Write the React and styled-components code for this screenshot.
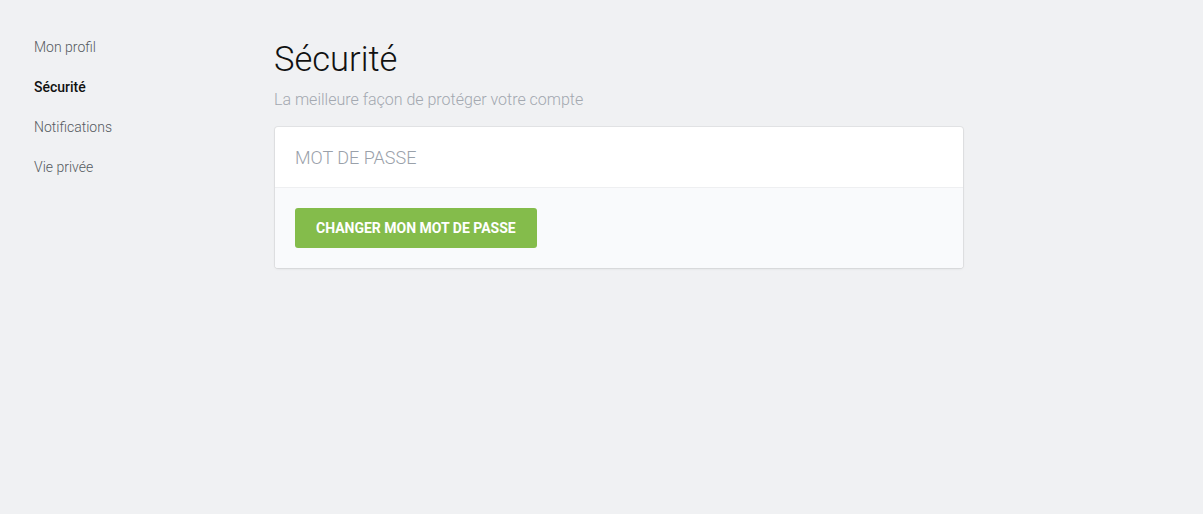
import React from 'react';
import styled, { createGlobalStyle } from 'styled-components';

const GlobalStyle = createGlobalStyle`
    html, body {
        margin: 0;
        padding: 0;
        background: #f0f1f3;
    }
    body {
        font-family: Roboto, "Liberation Sans", sans-serif;
        -webkit-font-smoothing: antialiased;
    }
`;

const Page = styled.div`
    display: flex;
    min-height: 513px;
    background: #f0f1f3;
`;

const Sidebar = styled.nav`
    display: flex;
    flex-direction: column;
    width: 274px;
    flex-shrink: 0;
    padding: 29px 0 0 34px;
    box-sizing: border-box;
`;

const NavItem = styled.a`
    display: block;
    height: 40px;
    line-height: 36px;
    font-size: 14px;
    font-weight: ${props => (props.$active ? 500 : 300)};
    color: ${props => (props.$active ? '#111' : '#555a60')};
    text-decoration: none;
    cursor: pointer;
`;

const Main = styled.main`
    display: flex;
    flex-direction: column;
    width: 689px;
    padding-top: 36px;
`;

const Title = styled.h1`
    margin: 0;
    font-size: 34.5px;
    font-weight: 300;
    line-height: 46px;
    color: #111;
`;

const Subtitle = styled.p`
    margin: 5px 0 14px;
    font-size: 16px;
    font-weight: 300;
    line-height: 26px;
    color: #a3a8b0;
`;

const Card = styled.section`
    margin-left: 1px;
    background: #fff;
    border-radius: 3px;
    box-shadow: 0 0 0 1px rgba(0, 0, 0, 0.05), 0 1px 3px rgba(0, 0, 0, 0.08);
    overflow: hidden;
`;

const CardHeader = styled.div`
    padding: 0 20px;
    height: 60px;
    display: flex;
    align-items: center;
    border-bottom: 1px solid #eeeff1;
    font-size: 18px;
    font-weight: 300;
    color: #9aa1aa;
    text-transform: uppercase;
`;

const CardBody = styled.div`
    padding: 20px;
    background: #f9fafc;
`;

const Button = styled.button`
    height: 40px;
    padding: 0 21px;
    border: none;
    border-radius: 3px;
    background: #84bc4b;
    color: #fff;
    font-family: Roboto, "Liberation Sans", sans-serif;
    font-size: 14px;
    font-weight: 700;
    text-transform: uppercase;
    cursor: pointer;
`;

const navItems = ['Mon profil', 'Sécurité', 'Notifications', 'Vie privée'];

export default function App() {
    return (
        <>
            <GlobalStyle />
            <Page>
                <Sidebar>
                    {navItems.map(item => (
                        <NavItem key={item} $active={item === 'Sécurité'}>{item}</NavItem>
                    ))}
                </Sidebar>
                <Main>
                    <Title>Sécurité</Title>
                    <Subtitle>La meilleure façon de protéger votre compte</Subtitle>
                    <Card>
                        <CardHeader>Mot de passe</CardHeader>
                        <CardBody>
                            <Button>Changer mon mot de passe</Button>
                        </CardBody>
                    </Card>
                </Main>
            </Page>
        </>
    );
}
